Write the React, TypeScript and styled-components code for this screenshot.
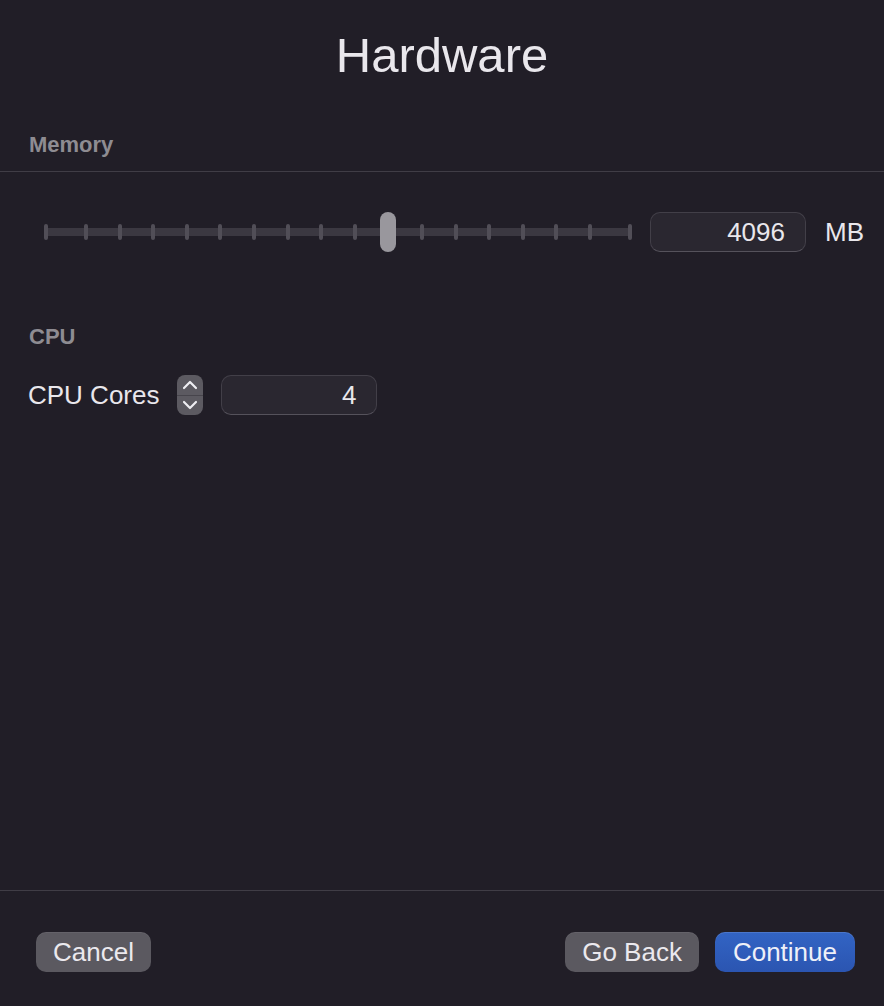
import React from "react";
import styled, { createGlobalStyle } from "styled-components";

const Global = createGlobalStyle`
  html, body { margin: 0; padding: 0; background: #211e27; }
  body { font-family: "Liberation Sans", Arial, sans-serif; -webkit-font-smoothing: antialiased; }
  * { box-sizing: border-box; }
`;

const Page = styled.div`
  width: 884px;
  height: 1006px;
  background: #211e27;
  display: flex;
  flex-direction: column;
  color: #e7e5ea;
  overflow: hidden;
`;

const Title = styled.h1`
  margin: 0;
  padding-top: 26px;
  height: 85px;
  font-size: 49px;
  line-height: 58px;
  font-weight: 400;
  text-align: center;
  color: #e9e7ec;
`;

const SectionHeader = styled.div<{ $top: number; $divider?: boolean }>`
  margin-top: ${(p) => p.$top}px;
  padding: 0 29px ${(p) => (p.$divider ? 13 : 0)}px;
  font-size: 22px;
  line-height: 26px;
  font-weight: 700;
  color: #8e8c92;
  border-bottom: ${(p) => (p.$divider ? "1px solid #403d46" : "none")};
`;

const Row = styled.div<{ $top: number; $gap: number }>`
  margin-top: ${(p) => p.$top}px;
  height: 40px;
  display: flex;
  align-items: center;
  gap: ${(p) => p.$gap}px;
`;

const SliderRow = styled(Row)`
  padding-left: 44px;
`;

const FieldRow = styled(Row)`
  padding-left: 28px;
`;

const Slider = styled.div`
  position: relative;
  width: 588px;
  height: 40px;
`;

const Track = styled.div`
  position: absolute;
  left: 0;
  right: 0;
  top: 16px;
  height: 8px;
  background: #3b3841;
`;

const Tick = styled.div`
  position: absolute;
  top: 12px;
  width: 4px;
  height: 16px;
  margin-left: -2px;
  border-radius: 2px;
  background: #514e57;
`;

const Thumb = styled.div`
  position: absolute;
  top: 0;
  width: 16px;
  height: 40px;
  margin-left: -8px;
  border-radius: 8px;
  background: #99979d;
`;

const Field = styled.div`
  width: 156px;
  height: 40px;
  border-radius: 10px;
  background: #2a2730;
  border: 1px solid #423f48;
  border-bottom-color: #55525b;
  padding-right: 20px;
  font-size: 26px;
  line-height: 38px;
  text-align: right;
  color: #e9e7ec;
`;

const Label = styled.span`
  font-size: 26px;
  line-height: 30px;
  color: #e9e7ec;
`;

const Unit = styled(Label)`
  margin-left: 1px;
`;

const Stepper = styled.div`
  width: 26px;
  height: 40px;
  border-radius: 8px;
  background: #5c5a61;
  display: flex;
  flex-direction: column;
  overflow: hidden;
`;

const StepHalf = styled.div<{ $top?: boolean }>`
  flex: 1;
  display: flex;
  align-items: center;
  justify-content: center;
  border-bottom: ${(p) => (p.$top ? "1px solid #47454c" : "none")};
`;

const Spacer = styled.div`
  flex: 1;
`;

const Footer = styled.div`
  height: 116px;
  border-top: 1px solid #403d46;
  padding: 41px 29px 0 36px;
  display: flex;
  align-items: flex-start;
`;

const Button = styled.button<{ $primary?: boolean }>`
  height: 40px;
  padding: 0 ${(p) => (p.$primary ? 18 : 17)}px;
  border: none;
  border-radius: 10px;
  font-family: inherit;
  font-size: 26px;
  line-height: 40px;
  color: ${(p) => (p.$primary ? "#eef0f8" : "#ebe9ee")};
  background: ${(p) =>
    p.$primary ? "linear-gradient(#3264c4, #2b55b1)" : "#5b5960"};
  box-shadow: ${(p) =>
    p.$primary
      ? "inset 0 1px 0 rgba(255,255,255,0.12)"
      : "inset 0 1px 0 rgba(255,255,255,0.06)"};
`;

const ButtonGroup = styled.div`
  margin-left: auto;
  display: flex;
  gap: 16px;
`;

const Chevron = ({ up }: { up?: boolean }) => (
  <svg width="16" height="10" viewBox="0 0 16 10">
    <path
      d={up ? "M2 8 L8 2 L14 8" : "M2 2 L8 8 L14 2"}
      fill="none"
      stroke="#eeeef2"
      strokeWidth="2.2"
      strokeLinecap="round"
      strokeLinejoin="round"
    />
  </svg>
);

const ticks: number[] = [2];
for (let k = 0; k < 16; k++) ticks.push(42 + 33.6 * k);
ticks.push(586);
const thumbPos = 344;

export default function App() {
  return (
    <Page>
      <Global />
      <Title>Hardware</Title>
      <SectionHeader $top={47} $divider>
        Memory
      </SectionHeader>
      <SliderRow $top={40} $gap={18}>
        <Slider>
          <Track />
          {ticks.map((x, i) => (
            <Tick key={i} style={{ left: x }} />
          ))}
          <Thumb style={{ left: thumbPos }} />
        </Slider>
        <Field>4096</Field>
        <Unit>MB</Unit>
      </SliderRow>
      <SectionHeader $top={72}>CPU</SectionHeader>
      <FieldRow $top={25} $gap={18}>
        <Label>CPU Cores</Label>
        <Stepper>
          <StepHalf $top>
            <Chevron up />
          </StepHalf>
          <StepHalf>
            <Chevron />
          </StepHalf>
        </Stepper>
        <Field>4</Field>
      </FieldRow>
      <Spacer />
      <Footer>
        <Button>Cancel</Button>
        <ButtonGroup>
          <Button>Go Back</Button>
          <Button $primary>Continue</Button>
        </ButtonGroup>
      </Footer>
    </Page>
  );
}
